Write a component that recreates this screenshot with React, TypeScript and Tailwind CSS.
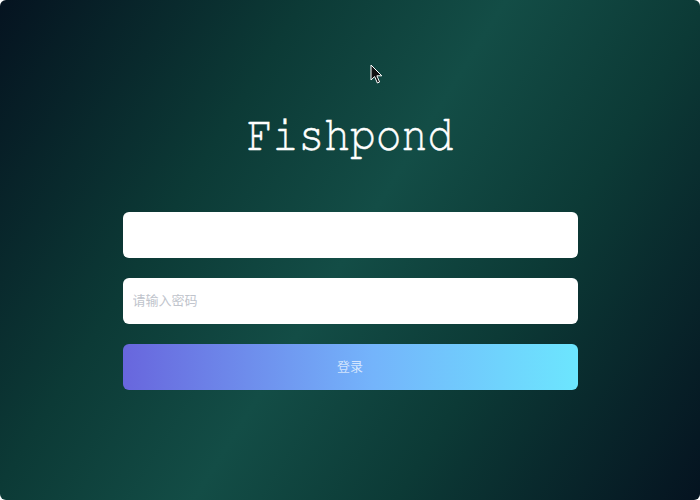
import { useState } from "react";

function Cursor() {
  return (
    <svg
      className="pointer-events-none absolute left-[370px] top-[64px]"
      width="14"
      height="21"
      viewBox="0 0 14 21"
    >
      <path
        d="M1 1 L1 16 L4.6 12.6 L7.4 19 L9.6 18 L6.9 11.8 L11.8 11.8 Z"
        fill="#111"
        stroke="#fff"
        strokeWidth="1"
        strokeLinejoin="round"
      />
    </svg>
  );
}

export default function App() {
  const [user, setUser] = useState("");
  const [password, setPassword] = useState("");

  return (
    <div className="h-[500px] w-[700px] bg-white font-['Noto_Sans_CJK_SC',sans-serif]">
      <div className="relative flex h-full w-full flex-col items-center overflow-hidden rounded-md bg-[linear-gradient(122deg,#051320_0%,#0c3a36_30%,#134d46_50%,#0c3a36_70%,#051320_100%)]">
        <Cursor />
        <h1 className="mt-[106px] origin-top scale-y-[1.15] font-['FreeMono','Liberation_Mono',monospace] text-[43px] leading-[52px] text-white [-webkit-text-stroke:0.4px_white]">
          Fishpond
        </h1>
        <form
          className="mt-[54px] flex w-[455px] flex-col gap-[20px]"
          onSubmit={(e) => e.preventDefault()}
        >
          <input
            className="h-[46px] w-full rounded-md bg-white px-[10px] pb-[3px] text-[13px] text-gray-700 outline-none placeholder:text-[#c0c4cc]"
            value={user}
            onChange={(e) => setUser(e.target.value)}
          />
          <input
            type="password"
            className="h-[46px] w-full rounded-md bg-white px-[10px] pb-[3px] text-[13px] text-gray-700 outline-none placeholder:text-[#c0c4cc]"
            placeholder="请输入密码"
            value={password}
            onChange={(e) => setPassword(e.target.value)}
          />
          <button
            type="submit"
            className="h-[46px] w-full rounded-md bg-[linear-gradient(to_right,#6866dd_0%,#74b4fb_55%,#6ce6fe_100%)] pb-[3px] text-[13px] text-white/70"
          >
            登录
          </button>
        </form>
      </div>
    </div>
  );
}
